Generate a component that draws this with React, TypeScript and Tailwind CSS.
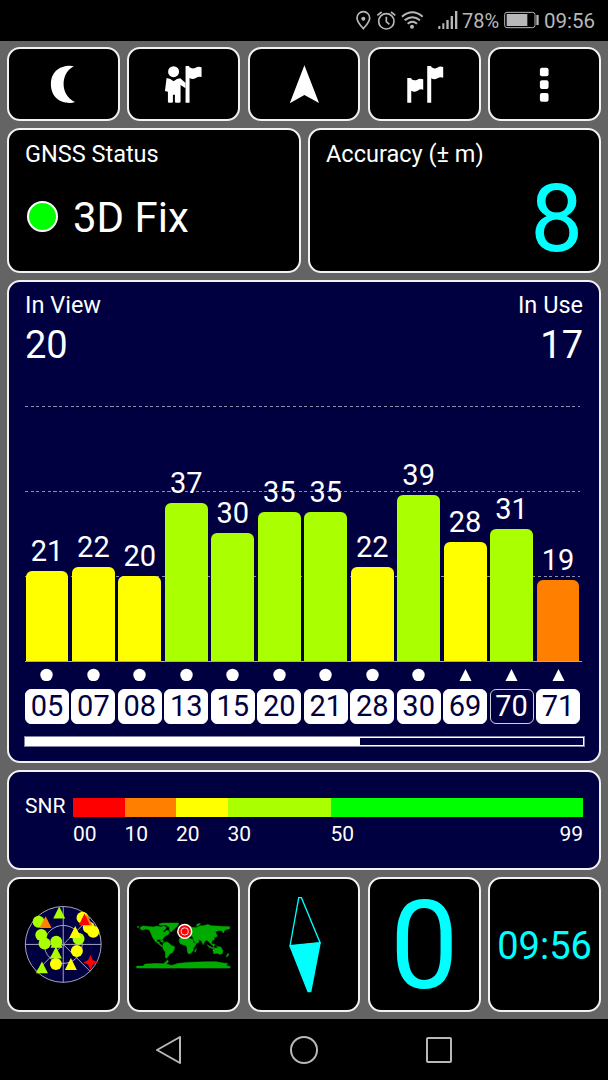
import type { ReactNode } from "react";

const satellites = [
  { id: "05", snr: 21, used: true, shape: "circle" },
  { id: "07", snr: 22, used: true, shape: "circle" },
  { id: "08", snr: 20, used: true, shape: "circle" },
  { id: "13", snr: 37, used: true, shape: "circle" },
  { id: "15", snr: 30, used: true, shape: "circle" },
  { id: "20", snr: 35, used: true, shape: "circle" },
  { id: "21", snr: 35, used: true, shape: "circle" },
  { id: "28", snr: 22, used: true, shape: "circle" },
  { id: "30", snr: 39, used: true, shape: "circle" },
  { id: "69", snr: 28, used: true, shape: "triangle" },
  { id: "70", snr: 31, used: false, shape: "triangle" },
  { id: "71", snr: 19, used: true, shape: "triangle" },
];

const snrScale = [
  { label: "00", className: "w-[51.5px] bg-[#ff0000]" },
  { label: "10", className: "w-[51.5px] bg-[#ff8000]" },
  { label: "20", className: "w-[51.5px] bg-[#ffff00]" },
  { label: "30", className: "w-[103px] bg-[#aaff00]" },
  { label: "50", className: "flex-1 bg-[#00ff00]" },
];

const PX_PER_DB = 4.265;

const barColor = (snr: number) => {
  if (snr < 20) return "bg-[#ff8000]";
  if (snr < 30) return "bg-[#ffff00]";
  return "bg-[#aaff00]";
};

const Panel = ({ className = "", children }: { className?: string; children: ReactNode }) => (
  <div className={`rounded-[13px] border-2 border-[#f2f2f2] ${className}`}>{children}</div>
);

const StatusBar = () => (
  <header className="flex h-[41px] items-center bg-black pl-[355px] text-[#b8b8b8]">
    <svg className="h-[41px] w-[17px] shrink-0" viewBox="45 0 51 123" fill="none" stroke="currentColor" strokeWidth="5">
      <path d="M70 86C60 74 51 66 51 54a19 19 0 0 1 38 0c0 12-9 20-19 32Z" />
      <circle cx="70" cy="56" r="6" fill="currentColor" stroke="none" />
    </svg>
    <svg className="ml-[4px] h-[41px] w-[21px] shrink-0" viewBox="108 0 63 123" fill="none" stroke="currentColor" strokeWidth="5">
      <circle cx="139" cy="64" r="23" />
      <path d="M139 50v15l9 8M112 46l13-10M153 36l13 10" />
    </svg>
    <svg className="ml-[4px] h-[41px] w-[24px] shrink-0" viewBox="183 0 72 123" fill="none" stroke="currentColor" strokeWidth="6">
      <path d="M186 50Q217 24 248 50M194 61Q217 42 240 61M203 71Q217 60 231 71" />
      <circle cx="216" cy="80" r="6" fill="currentColor" stroke="none" />
    </svg>
    <svg className="ml-[13px] h-[41px] w-[21px] shrink-0" viewBox="296 0 63 123" fill="currentColor">
      <path d="M297 78h6v9h-6zM309 70h6v17h-6zM321 60h7v27h-7zM334 48h7v39h-7zM347 33h7v54h-7z" />
    </svg>
    <span className="ml-[3px] w-[38px] text-[20px] leading-none">78%</span>
    <svg className="ml-[4px] h-[41px] w-[36px] shrink-0" viewBox="491 0 108 123" fill="currentColor">
      <rect x="493" y="37" width="91" height="46" rx="7" fill="none" stroke="currentColor" strokeWidth="3" />
      <path d="M499 42h62v36h-62zM588 45h7v30h-7z" />
    </svg>
    <span className="ml-[4px] pt-[2px] text-[20.5px] leading-none">09:56</span>
  </header>
);

const MoonIcon = () => (
  <svg className="size-full" viewBox="27 27 327 210" fill="#fff">
    <path d="M222 79C202 73 153 81 153 133C153 186 204 195 225 186C181 167 180 100 222 79Z" />
  </svg>
);

const HikerIcon = () => (
  <svg className="size-full" viewBox="388 27 327 210" fill="#fff">
    <circle cx="522" cy="95" r="16.5" />
    <path d="M501 114L512 117L522 124L532 117L542 115L558 129V145L543 135V158V187Q534 190 526 187V164H520V187Q512 190 505 187V155L496 153Z" />
    <path d="M558 78H569V81Q579 88 588 83Q597 78 606 82V111Q598 108 589 114Q579 120 570 114V188H558Z" />
  </svg>
);

const ArrowIcon = () => (
  <svg className="size-full" viewBox="748.5 27 327 210" fill="#fff">
    <path d="M912 76L956 189L912 165L868 190Z" />
  </svg>
);

const FlagsIcon = () => (
  <svg className="size-full" viewBox="197 27 327 210" fill="#fff">
    <path d="M309 114H321V117Q330 124 339 119Q347 114 357 118V149Q348 146 340 152Q330 158 321 152V188H309Z" />
    <path d="M369 78H381V81Q390 88 399 83Q407 77 417 81V113Q408 109 400 115Q390 121 381 115V188H369Z" />
  </svg>
);

const MoreIcon = () => (
  <svg className="size-full" viewBox="558 27 327 210" fill="#fff">
    <rect x="708" y="83" width="26" height="26" rx="6" />
    <rect x="708" y="121" width="26" height="26" rx="6" />
    <rect x="708" y="159" width="26" height="26" rx="6" />
  </svg>
);

const SkyPlot = () => (
  <svg className="size-full" viewBox="27 27 327 393">
    <g fill="none" stroke="#a5a5bd" strokeWidth="3">
      <circle cx="190" cy="223" r="114" fill="#000040" />
      <circle cx="190" cy="223" r="57" />
      <path d="M76 223H304M190 109V337M109 304L271 142M190 223L271 304" />
    </g>
    <g fill="#aaff00">
      <circle cx="116" cy="155" r="18" />
      <circle cx="124" cy="195" r="18" />
      <circle cx="134" cy="220" r="18" />
      <circle cx="169" cy="215" r="18" />
      <circle cx="236" cy="206" r="18" />
      <path d="M178 109L196 145H160ZM170 197L188 233H152ZM168 229L186 265H150ZM126 274L144 310H108Z" />
    </g>
    <g fill="#ffff00">
      <circle cx="248" cy="143" r="18" />
      <circle cx="267" cy="172" r="18" />
      <circle cx="280" cy="185" r="18" />
      <circle cx="231" cy="243" r="18" />
      <circle cx="168" cy="282" r="18" />
      <path d="M226 168L244 204H208ZM213 264L231 300H195Z" />
    </g>
    <path d="M137 138L155 174H119ZM261 132L278 166H244Z" fill="#ff8000" />
    <path d="M254 130L270 165H237ZM272 254L279 270L294 277L279 284L272 300L265 284L251 277L265 270Z" fill="#ff0000" />
  </svg>
);

const WorldMap = () => (
  <svg className="size-full" viewBox="28 27 326 393">
    <g fill="#00aa00" stroke="#00aa00" strokeWidth="1.5">
      <path d="M63 171L70 168L86 169L100 171L112 168L124 171L132 167L140 172L136 179L130 182L133 188L139 181L146 181L149 188L145 194L137 197L132 203L128 208L129 214L123 208L112 208L112 215L119 216L119 221L129 228L126 230L115 220L106 213L98 201L94 190L89 180L79 177L68 180L61 176Z" />
      <path d="M118 162L130 159L177 159L173 168L167 174L160 180L154 186L150 182L149 173L144 168L136 164L120 166Z" />
      <path d="M131 219L141 215L149 220L155 226L165 230L163 239L158 248L151 251L145 259L140 265L137 261L137 246L130 237L129 229Z" />
      <path d="M180 205L188 200L199 203L211 205L219 208L221 217L229 220L226 228L221 234L220 242L214 249L207 252L203 245L202 233L199 226L189 224L181 220L178 212Z" />
      <path d="M184 197L184 189L196 181L193 175L201 168L211 169L218 172L230 172L242 167L251 167L264 163L275 167L292 168L313 169L330 170L330 176L320 178L314 181L311 189L305 181L295 182L287 185L290 193L283 200L284 208L276 212L275 223L270 219L265 213L259 210L252 219L250 224L245 212L236 209L238 216L229 220L221 210L219 200L211 197L204 202L194 194L190 201Z" />
      <path d="M279 239L288 234L296 232L303 231L309 241L308 250L300 253L293 249L282 251Z" />
      <path d="M230 235L227 247L224 243ZM262 224L276 232L286 233L283 236L270 233ZM275 222L285 222L282 230ZM290 228L304 232L299 234ZM324 250L328 253L321 261L319 259ZM289 192L293 198L286 202L284 199ZM188 179L182 188L180 182ZM232 162L242 160L240 164L230 169ZM120 211L133 214L128 217ZM52 170L58 169L57 173Z" />
      <path d="M51 288L70 288L76 282L110 280L132 281L143 270L147 274L140 282L156 286L174 280L203 277L229 276L262 275L290 275L310 279L324 280L319 286L331 289V294H51Z" />
    </g>
    <circle cx="195" cy="184" r="23" fill="#fff" />
    <circle cx="195" cy="184" r="18.5" fill="#f00" />
    <circle cx="195" cy="184" r="11" fill="none" stroke="#fff" strokeWidth="2.5" />
  </svg>
);

const Compass = () => (
  <svg className="size-full" viewBox="28 27 326 393" fill="none" stroke="#0ff" strokeWidth="4">
    <path d="M148 227L174 83H182L238 218Z" />
    <path d="M148 228L238 219L210 364H202Z" fill="#0ff" />
  </svg>
);

const SatelliteChart = () => (
  <Panel className="h-[483px] bg-[#000040] px-4">
    <div className="flex h-[123px] justify-between pt-[12px]">
      <div>
        <p className="text-[23.5px] leading-none">In View</p>
        <p className="mt-[8px] text-[38px] leading-none">20</p>
      </div>
      <div className="text-right">
        <p className="text-[23.5px] leading-none">In Use</p>
        <p className="mt-[8px] text-[38px] leading-none">17</p>
      </div>
    </div>

    <div className="relative h-[257px] w-[557px] border-b border-[#a5a5bd]">
      {[20, 40, 60].map((level) => (
        <div
          key={level}
          className="absolute left-0 h-px w-[555px] bg-[repeating-linear-gradient(90deg,#8f8fa8_0_3px,transparent_3px_5.7px)]"
          style={{ bottom: level * PX_PER_DB - 1.4 }}
        />
      ))}
      <div className="relative grid h-full w-[554.5px] grid-cols-12 items-end gap-[3.6px] pl-[0.5px]">
        {satellites.map((sat) => (
          <div key={sat.id} className="flex flex-col items-center">
            <span className="mb-[5px] text-[29px] leading-none">{sat.snr}</span>
            <div
              className={`w-full rounded-t-[6px] ${barColor(sat.snr)}`}
              style={{ height: sat.snr * PX_PER_DB }}
            />
          </div>
        ))}
      </div>
    </div>

    <div className="mt-[6px] grid w-[555px] grid-cols-12 gap-[2.6px]">
      {satellites.map((sat) => (
        <div key={sat.id} className="flex flex-col items-center gap-2">
          <svg className="size-[13px]" viewBox="0 0 13 13" fill="#fff">
            {sat.shape === "circle" ? <circle cx="6.5" cy="7" r="6.2" /> : <path d="M6.5 1L12.5 13H.5Z" />}
          </svg>
          <span
            className={`flex h-[35px] w-full items-center justify-center rounded-[6px] border text-[29px] leading-none ${
              sat.used ? "border-white bg-white text-[#000040]" : "border-[#d0d0dc] text-white"
            }`}
          >
            {sat.id}
          </span>
        </div>
      ))}
    </div>

    <div className="mt-[13px] h-[9px] w-[559px] border-[1.5px] border-white outline-[0.5px] outline-white/50">
      <div className="h-full w-[334px] bg-white" />
    </div>
  </Panel>
);

const App = () => {
  return (
    <div className="flex h-[1080px] w-[608px] flex-col overflow-hidden bg-black font-[Roboto,sans-serif] text-white">
      <StatusBar />

      <main className="flex h-[978px] flex-col gap-[7px] bg-[#646464] px-[7px] pt-[6px]">
        <div className="grid h-[74px] grid-cols-5 gap-[7.5px]">
          <Panel className="bg-black"><MoonIcon /></Panel>
          <Panel className="bg-black"><HikerIcon /></Panel>
          <Panel className="bg-black"><ArrowIcon /></Panel>
          <Panel className="bg-black"><FlagsIcon /></Panel>
          <Panel className="bg-black"><MoreIcon /></Panel>
        </div>

        <div className="grid h-[145px] grid-cols-2 gap-[7px]">
          <Panel className="bg-black px-4 pt-[13px]">
            <p className="text-[23.5px] leading-none">GNSS Status</p>
            <div className="mt-[30px] flex items-start">
              <span className="ml-[2px] mt-[4px] size-[31px] rounded-full border-2 border-white bg-[#00ff00]" />
              <span className="ml-[15px] text-[42px] leading-none">3D Fix</span>
            </div>
          </Panel>
          <Panel className="bg-black px-4 pt-[13px]">
            <p className="pl-[0.5px] text-[23.5px] leading-none">Accuracy (± m)</p>
            <p className="mt-[5px] text-right text-[94px] leading-none text-[#00ffff]">8</p>
          </Panel>
        </div>

        <SatelliteChart />

        <Panel className="flex h-[100px] bg-[#000040] px-4 pt-[26px]">
          <span className="w-12 text-[21px] leading-[16px]">SNR</span>
          <div className="flex-1">
            <div className="flex h-[19px] w-[510px]">
              {snrScale.map((step) => (
                <div key={step.label} className={step.className}>
                  <span className="block pt-[26px] text-[21px] leading-none">{step.label}</span>
                </div>
              ))}
              <span className="-ml-8 w-8 pt-[26px] text-right text-[21px] leading-none">99</span>
            </div>
          </div>
        </Panel>

        <div className="grid h-[135px] grid-cols-5 gap-[7.5px]">
          <Panel className="bg-black"><SkyPlot /></Panel>
          <Panel className="bg-black"><WorldMap /></Panel>
          <Panel className="bg-black"><Compass /></Panel>
          <Panel className="flex items-center justify-center bg-black pt-[5px] text-[122px] leading-none text-[#00ffff]">0</Panel>
          <Panel className="flex items-center justify-center bg-black pt-[2px] text-[38px] leading-none text-[#00ffff]">09:56</Panel>
        </div>
      </main>

      <nav className="flex flex-1 items-center justify-center gap-[107px] bg-black">
        <svg className="size-[28px]" viewBox="0 0 28 28" fill="none" stroke="#b8b8b8" strokeWidth="2" strokeLinejoin="round">
          <path d="M2 14L25 1V27Z" />
        </svg>
        <svg className="size-[28px]" viewBox="0 0 28 28" fill="none" stroke="#b8b8b8" strokeWidth="2">
          <circle cx="14" cy="14" r="13" />
        </svg>
        <svg className="size-[28px]" viewBox="0 0 28 28" fill="none" stroke="#b8b8b8" strokeWidth="2">
          <rect x="2" y="2" width="24" height="24" rx="1" />
        </svg>
      </nav>
    </div>
  );
};

export default App;
